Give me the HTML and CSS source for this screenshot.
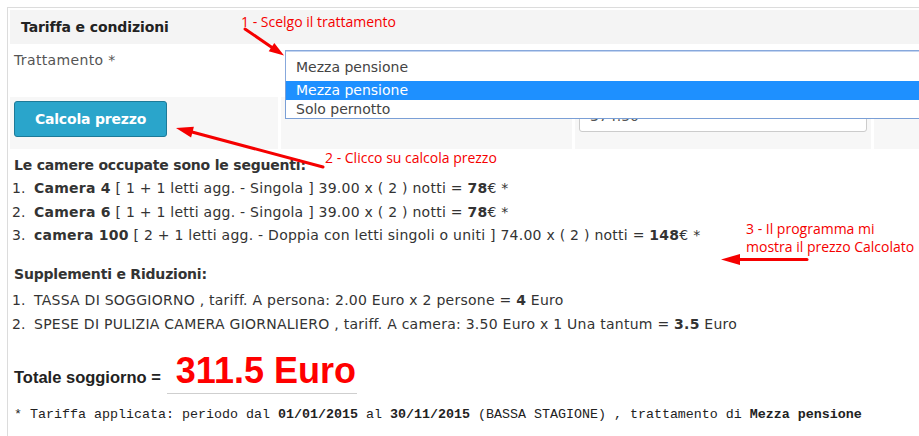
FILE: index.html
```html
<!DOCTYPE html>
<html lang="it">
<head>
<meta charset="utf-8">
<title>Tariffa e condizioni</title>
<link rel="stylesheet" href="styles.css">
</head>
<body>
<div class="page">
  <div class="panel">
    <div class="panel-head">Tariffa e condizioni</div>
    <div class="row row-1">
      <div class="cell label-cell">Trattamento *</div>
      <div class="cell select-cell"><div class="select">Mezza pensione</div></div>
    </div>
    <div class="row row-2">
      <div class="cell"><button class="btn">Calcola prezzo</button></div>
      <div class="cell"></div>
      <div class="cell"><div class="input">374.50</div></div>
      <div class="cell"></div>
    </div>
    <div class="results">
      <h4 class="subhead">Le camere occupate sono le seguenti:</h4>
      <ol class="list">
        <li><span class="num">1.</span><span><b>Camera 4</b> [ 1 + 1 letti agg. - Singola ] 39.00 x ( 2 ) notti = <b>78</b>€ *</span></li>
        <li><span class="num">2.</span><span><b>Camera 6</b> [ 1 + 1 letti agg. - Singola ] 39.00 x ( 2 ) notti = <b>78</b>€ *</span></li>
        <li><span class="num">3.</span><span><b>camera 100</b> [ 2 + 1 letti agg. - Doppia con letti singoli o uniti ] 74.00 x ( 2 ) notti = <b>148</b>€ *</span></li>
      </ol>
      <h4 class="subhead sub2">Supplementi e Riduzioni:</h4>
      <ol class="list list2">
        <li><span class="num">1.</span><span>TASSA DI SOGGIORNO , tariff. A persona: 2.00 Euro x 2 persone = <b>4</b> Euro</span></li>
        <li><span class="num">2.</span><span>SPESE DI PULIZIA CAMERA GIORNALIERO , tariff. A camera: 3.50 Euro x 1 Una tantum = <b>3.5</b> Euro</span></li>
      </ol>
      <div class="total">
        <span class="total-label">Totale soggiorno =</span>
        <span class="total-value">311.5 Euro</span>
      </div>
      <p class="note">* Tariffa applicata: periodo dal <b>01/01/2015</b> al <b>30/11/2015</b> (BASSA STAGIONE) , trattamento di <b>Mezza pensione</b></p>
    </div>
  </div>

  <ul class="dropdown">
    <li class="opt selected">Mezza pensione</li>
    <li class="opt">Solo pernotto</li>
  </ul>

  <svg class="arrows" width="919" height="436" viewBox="0 0 919 436">
    <g stroke="#f50000" stroke-width="3" stroke-linecap="round" fill="none">
      <line x1="245" y1="29" x2="272" y2="47.5"/>
      <line x1="323" y1="167" x2="192" y2="132"/>
      <line x1="807" y1="259.5" x2="738" y2="259.5"/>
    </g>
    <g fill="#f50000">
      <polygon points="284,55.5 268.7,51.2 274.3,43"/>
      <polygon points="176,128 193.9,126.8 191.1,137.4"/>
      <polygon points="721,259.5 740,254 740,265"/>
    </g>
  </svg>
  <div class="annot a1">1 - Scelgo il trattamento</div>
  <div class="annot a2">2 - Clicco su calcola prezzo</div>
  <div class="annot a3">3 - Il programma mi<br>mostra il prezzo Calcolato</div>
</div>
</body>
</html>
```
FILE: styles.css
```css
html, body {
  margin: 0;
  padding: 0;
  overflow: hidden;
  background: #fff;
}
body {
  width: 919px;
  height: 436px;
  font-family: "DejaVu Sans", Verdana, sans-serif;
  color: #333;
}
.page {
  position: relative;
  display: flow-root;
  width: 919px;
  height: 436px;
}
.panel {
  margin: 7px 0 0 7px;
  border-left: 1px solid #dcdcdc;
  border-top: 1px solid #dcdcdc;
  padding: 2px 0 0 2px;
  height: 429px;
  box-sizing: border-box;
}
.panel-head {
  height: 34px;
  line-height: 34px;
  background: #f4f4f4;
  padding-left: 11px;
  font-size: 14px;
  letter-spacing: -0.1px;
  font-weight: bold;
  color: #222;
}
.row {
  display: grid;
  column-gap: 3px;
}
.row-1 {
  grid-template-columns: 268px 1fr;
  height: 53px;
}
.label-cell {
  padding: 6px 0 0 4px;
  font-size: 14px;
  letter-spacing: 0.35px;
  line-height: 20px;
  color: #555;
}
.select-cell {
  padding: 6px 0 0 4px;
}
.select {
  height: 30px;
  border: 1px solid #87a8dc;
  border-bottom-color: #8e9bae;
  border-right: none;
  box-shadow: inset 0 1px 0 #c3d4f0;
  padding-left: 10px;
  font-size: 14px;
  line-height: 32px;
  color: #444;
  margin-right: -20px;
}
.row-2 {
  grid-template-columns: 268px 291px 296px 1fr;
  height: 52px;
}
.row-2 .cell {
  background: #f7f7f7;
}
.row-2 .cell:first-child {
  padding: 4px 0 0 4px;
}
.row-2 .cell:nth-child(3) {
  padding: 3px 0 0 4px;
}
.btn {
  width: 153px;
  height: 36px;
  background: #2aa5cb;
  border: 1px solid #1d7a98;
  border-radius: 3px;
  color: #fff;
  font-family: "DejaVu Sans", Verdana, sans-serif;
  font-size: 14px;
  letter-spacing: -0.2px;
  font-weight: bold;
  padding: 0;
}
.input {
  width: 288px;
  height: 32px;
  box-sizing: border-box;
  background: #fff;
  border: 1px solid #cccccc;
  border-radius: 3px;
  padding-left: 10px;
  font-size: 14px;
  line-height: 30px;
  color: #555;
}
.results {
  padding-left: 4px;
}
.subhead {
  margin: 6px 0 2px;
  font-size: 14px;
  letter-spacing: -0.2px;
  line-height: 20px;
  font-weight: bold;
  color: #333;
}
.sub2 {
  margin-top: 16px;
  margin-bottom: 5.75px;
}
.list {
  margin: 0 0 0 -2px;
  padding: 0;
  list-style: none;
  font-size: 14px;
  letter-spacing: 0.25px;
  line-height: 23.5px;
  color: #333;
}
.list li {
  display: flex;
  white-space: nowrap;
}
.num {
  width: 22px;
  flex: none;
  letter-spacing: 0;
}
.total {
  display: flex;
  align-items: baseline;
  margin-top: 15px;
  font-family: "Liberation Sans", Arial, sans-serif;
  font-weight: bold;
}
.total-label {
  font-size: 16.5px;
  color: #222;
}
.total-value {
  box-sizing: border-box;
  width: 190px;
  margin-left: 6px;
  padding: 0 0 2px 9px;
  border-bottom: 1px solid #cfcfcf;
  font-size: 36px;
  line-height: 40px;
  white-space: nowrap;
  color: #ff0000;
}
.note {
  margin: 13px 0 0;
  font-family: "Liberation Mono", "Courier New", monospace;
  font-size: 13.33px;
  line-height: 16px;
  color: #222;
  white-space: nowrap;
}
.dropdown {
  position: absolute;
  left: 285px;
  top: 81px;
  width: 660px;
  margin: 0;
  padding: 0;
  list-style: none;
  background: #fff;
  border-left: 1px solid #7a9fd6;
  border-bottom: 1px solid #7a9fd6;
  font-size: 14px;
  color: #444;
}
.opt {
  height: 18px;
  line-height: 18px;
  padding-left: 10px;
}
.opt.selected {
  height: 19px;
  line-height: 19px;
  background: #1e90ff;
  color: #fff;
}
.arrows {
  position: absolute;
  left: 0;
  top: 0;
  pointer-events: none;
}
.annot {
  position: absolute;
  font-family: "Open Sans", "Noto Sans", sans-serif;
  font-size: 14px;
  line-height: 18px;
  color: #f50000;
  white-space: nowrap;
}
.a1 { left: 241px; top: 13px; }
.a2 { left: 325px; top: 149px; }
.a3 { left: 746px; top: 220px; }
```
